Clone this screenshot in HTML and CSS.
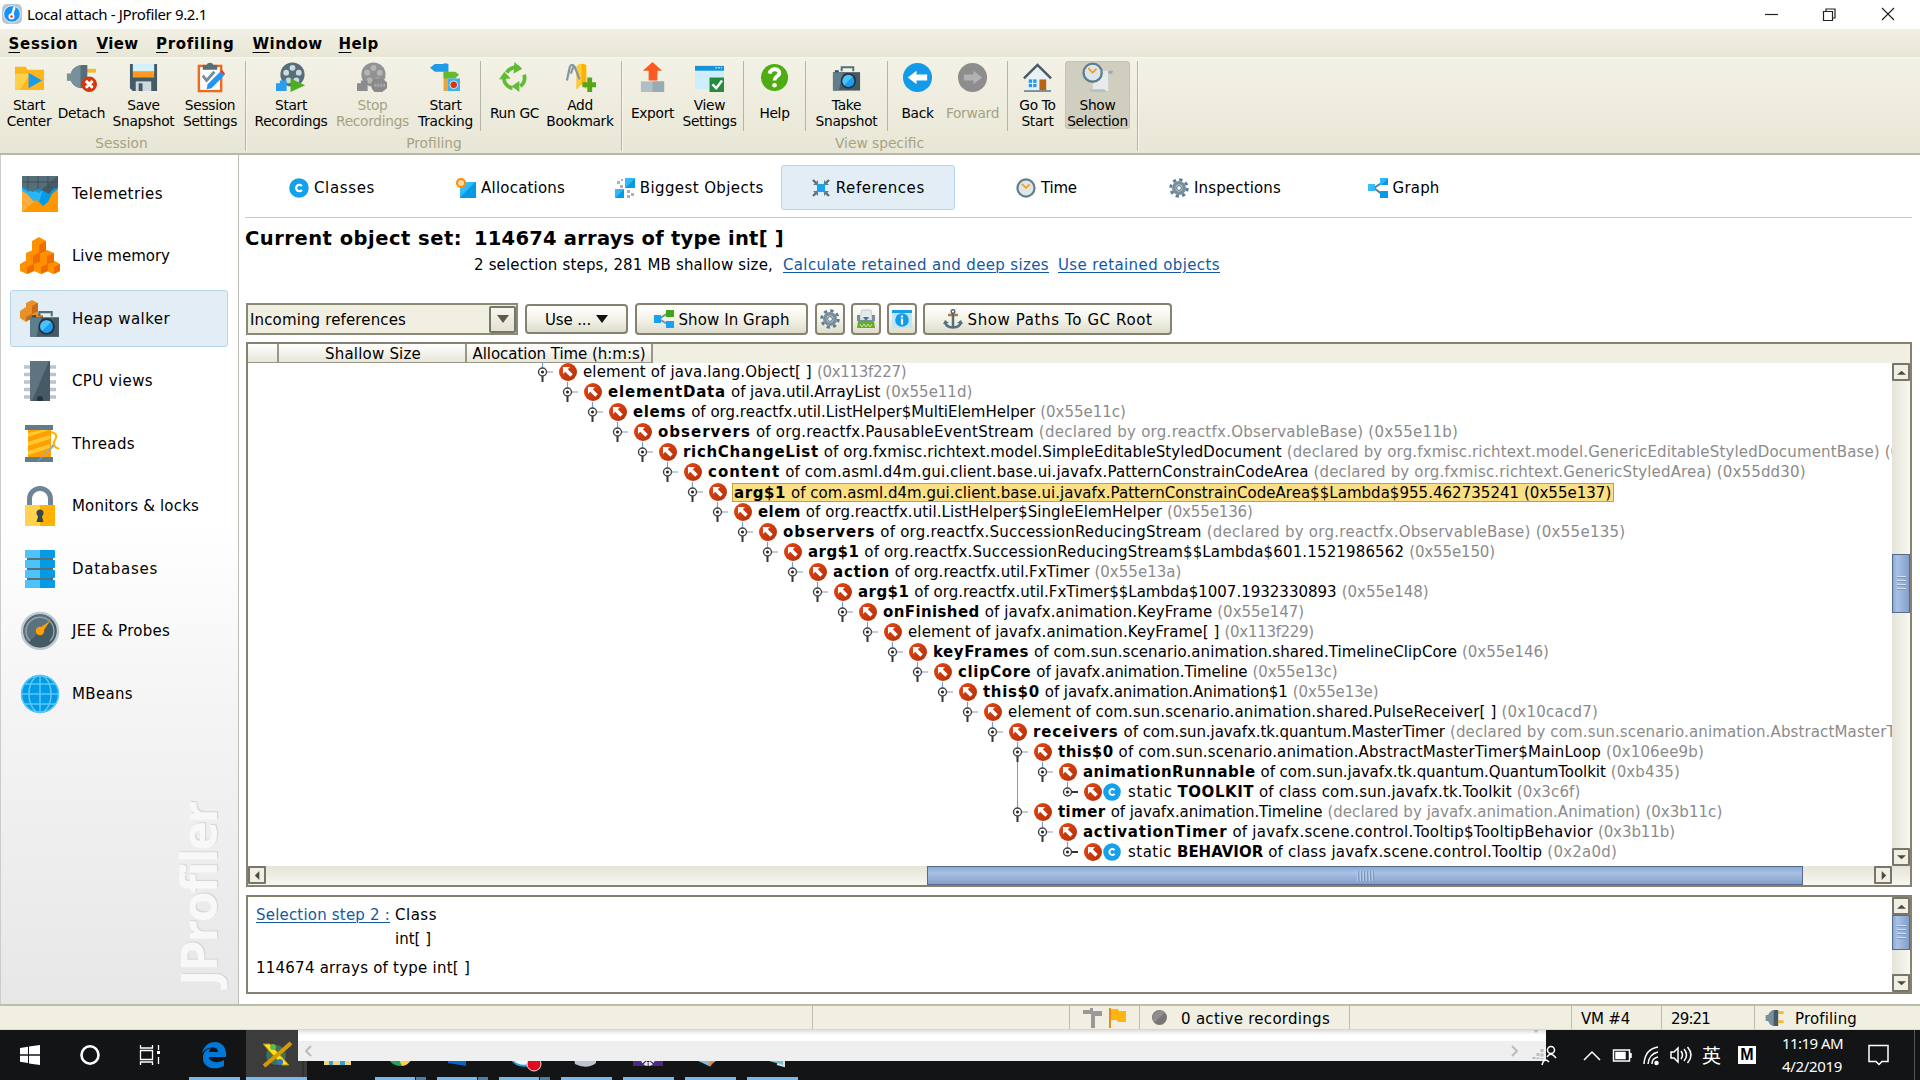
FILE: index.html
```html
<!DOCTYPE html>
<html lang="en">
<head>
<meta charset="utf-8">
<title>Local attach - JProfiler 9.2.1</title>
<link rel="stylesheet" href="styles.css">
</head>
<body>
<svg class="defs" width="0" height="0">
  <defs>
    <linearGradient id="gRed" x1="0" y1="0" x2="1" y2="1"><stop offset="0" stop-color="#e64a19"/><stop offset="1" stop-color="#b32d05"/></linearGradient>
    <linearGradient id="gBlue" x1="0" y1="0" x2="1" y2="1"><stop offset="0" stop-color="#4fc3f7"/><stop offset=".5" stop-color="#29b6f6"/><stop offset=".5" stop-color="#039be5"/></linearGradient>
  </defs>
  <symbol id="ref" viewBox="0 0 18 18"><circle cx="9" cy="9" r="9" fill="url(#gRed)"/><path d="M4 4h7l-2.2 2.2 5 5-2.6 2.6-5-5L4 11z" fill="#fff"/></symbol>
  <symbol id="cls" viewBox="0 0 18 18"><circle cx="9" cy="9" r="8.8" fill="#14a0ec"/><path d="M11.6 7.2A2.9 2.9 0 1 0 11.6 10.8" fill="none" stroke="#fff" stroke-width="2"/></symbol>
  <symbol id="camera" viewBox="0 0 30 26"><path d="M10 5V1h12v4" fill="none" stroke="#546e7a" stroke-width="2"/><path d="M1 6h28v19H1z" fill="#455a64"/><path d="M1 6h11L7 25H1z" fill="#607d8b"/><path d="M3 4h4v2H3z" fill="#37474f"/><circle cx="17" cy="15" r="8" fill="#263238"/><circle cx="17" cy="15" r="6.2" fill="#1e9df0"/><path d="M12.6 19.4a6.2 6.2 0 0 1 8.8-8.8z" fill="#4fc0fa"/></symbol>
  <symbol id="gear" viewBox="0 0 20 20"><circle cx="10" cy="10" r="8.3" fill="none" stroke="#607d8b" stroke-width="2.8" stroke-dasharray="3.25 3.27"/><circle cx="10" cy="10" r="5.2" fill="#cfd8dc" stroke="#78909c" stroke-width="3.6"/><circle cx="10" cy="10" r="2.4" fill="#f5f7f8" stroke="#546e7a"/></symbol>
  <symbol id="clock" viewBox="0 0 22 22"><circle cx="11" cy="11" r="9.4" fill="#dde7eb" stroke="#607d8b" stroke-width="2.4"/><path d="M6.5 6.5L11 11l4-4" fill="none" stroke="#ff9d1c" stroke-width="2"/></symbol>
  <symbol id="plug" viewBox="0 0 22 20"><path d="M14 4h6M14 14h6" stroke="#f5b82e" stroke-width="3"/><path d="M14 1v18H10A9 9 0 0 1 3 13H0V7h3A9 9 0 0 1 10 1z" fill="#455a64"/><path d="M9 1v18A9 9 0 0 1 3 13H0V7h3A9 9 0 0 1 9 1z" fill="#78909c"/></symbol>
</svg>

<header class="titlebar">
  <svg class="app-icon" viewBox="0 0 20 20"><rect width="20" height="20" rx="5" fill="#b9c6d2"/><circle cx="10" cy="10" r="8.3" fill="#1792f0" stroke="#e8eef4"/><path d="M12.500 3L10 11" stroke="#fff" stroke-width="2.4"/><circle cx="9.500" cy="12.500" r="3" fill="#fff"/><circle cx="9.500" cy="12.500" r="1.300" fill="#e33"/></svg>
  <span class="caption" data-w="180">Local attach - JProfiler 9.2.1</span>
  <svg class="win-buttons" viewBox="0 0 150 28" fill="none" stroke="#222" stroke-width="1.2"><path d="M15 13.500h13"/><path d="M73.500 10.500h9v9h-9zM76 10V8h9v9h-2.500"/><path d="M132 7l12 12M144 7l-12 12"/></svg>
</header>

<nav class="menubar">
  <span class="m1" data-w="70"><u>S</u>ession</span><span class="m2" data-w="42"><u>V</u>iew</span><span class="m3" data-w="78"><u>P</u>rofiling</span><span class="m4" data-w="70"><u>W</u>indow</span><span data-w="40"><u>H</u>elp</span>
</nav>

<section class="toolbar">
  <div class="group g-session">
    <div class="tools">
      <div class="tool w54"><svg viewBox="0 0 32 32"><path d="M1 5h11l2 3h17v21H1z" fill="#ffb61c"/><path d="M1 12h16L6 29H1z" fill="#ffd04a"/><path d="M15 11l14 8-14 8z" fill="#1e9be6"/></svg><p>Start<br>Center</p></div>
      <div class="tool w51"><svg viewBox="0 0 32 32"><path d="M20 9h11" stroke="#f5b82e" stroke-width="4"/><path d="M22 3v24h-6C9 26 6 22 5 19H1v-7h4c1-4 4-8 11-9z" fill="#546e7a"/><path d="M15 3v24C9 26 6 22 5 19H1v-7h4c1-4 4-7 10-9z" fill="#78909c"/><circle cx="24" cy="23" r="8" fill="#d8350f"/><path d="M20.500 19.500l7 7m0-7l-7 7" stroke="#fff" stroke-width="3"/></svg><p>Detach</p></div>
      <div class="tool w73"><svg viewBox="0 0 32 32"><path d="M2 2h28v28H5l-3-3z" fill="#455a64"/><path d="M5 2h22v8H5z" fill="#d3f0fb"/><path d="M5 10h22v6H5z" fill="#ff9a1c"/><path d="M8 20h16v10H8z" fill="#cfd8dc"/><path d="M11 22h4v8h-4z" fill="#455a64"/></svg><p>Save<br>Snapshot</p></div>
      <div class="tool w60"><svg viewBox="0 0 32 32"><rect x="4" y="4" width="23" height="26" fill="#fff" stroke="#ed6a1f" stroke-width="2.500"/><path d="M8 3h4c1-3 6-3 7 0h4v5H8z" fill="#546e7a"/><path d="M8 14l4 5 8-9" fill="none" stroke="#78909c" stroke-width="3"/><path d="M12 28l1-5L26 10l4 4-13 13z" fill="#2196f3"/><path d="M26 10l4 4 1-2-3-4z" fill="#e53935"/></svg><p>Session<br>Settings</p></div>
    </div>
    <div class="group-name">Session</div>
  </div>
  <div class="group g-profiling">
    <div class="tools">
      <div class="tool w80"><svg viewBox="0 0 32 32"><circle cx="17" cy="13" r="12.500" fill="#546e7a"/><g fill="#cfd8dc"><circle cx="17" cy="6" r="3"/><circle cx="10.500" cy="11" r="3"/><circle cx="23.500" cy="11" r="3"/><circle cx="13" cy="19" r="3"/><circle cx="21" cy="19" r="3"/></g><path d="M0 22h4v-3h7v11H0z" fill="#2b9fee"/><path d="M15 17l15 7-15 7z" fill="#4caf1f"/></svg><p>Start<br>Recordings</p></div>
      <div class="tool w83 off"><svg viewBox="0 0 32 32"><circle cx="17" cy="13" r="12.500" fill="#929292"/><g fill="#b5b5b5"><circle cx="17" cy="6" r="3"/><circle cx="10.500" cy="11" r="3"/><circle cx="23.500" cy="11" r="3"/><circle cx="13" cy="19" r="3"/><circle cx="21" cy="19" r="3"/></g><path d="M0 22h4v-3h7v11H0z" fill="#8c8c8c"/><path d="M18 17h8l5 4v6l-5 4h-8l-3-4v-6z" fill="#8a8a8a"/><path d="M18 24h11" stroke="#aaa" stroke-width="3" stroke-dasharray="2 1"/></svg><p>Stop<br>Recordings</p></div>
      <div class="tool w63"><svg viewBox="0 0 32 32"><path d="M14 1h4v29h-4z" fill="#e8a33c"/><path d="M0 6l5-4h14v8H5z" fill="#1e9be6"/><path d="M14 10h12l4 3-4 4H14z" fill="#66bb2a"/><path d="M18 17h13v13H18z" fill="#3bb2f4"/><circle cx="24.500" cy="23.500" r="4" fill="#d8350f" stroke="#d4eefb"/></svg><p>Start<br>Tracking</p></div>
      <i class="bar wide"></i>
      <div class="tool w57"><svg viewBox="0 0 32 32"><g fill="none" stroke="#62bb35" stroke-width="4"><path d="M8 11a11 11 0 0 1 13-5"/><path d="M26 13a11 11 0 0 1-4 12"/><path d="M14 27A11 11 0 0 1 5 17"/></g><g fill="#62bb35"><path d="M16 0l8 7-9 5z"/><path d="M21 19.500V31l-8-6z"/><path d="M0 18l5.500-8L12 17z"/></g></svg><p>Run GC</p></div>
      <div class="tool w74"><svg viewBox="0 0 32 32"><path d="M12 5q4-5 10-2v25l-5-5-5 5z" fill="#ffb300"/><path d="M12 5q2-4 5-3v21l-5 5z" fill="#ffca3a"/><path d="M2 19L5 5q2-4 5 0l5 13M6 12l3-8" fill="none" stroke="#8196a1" stroke-width="2.200"/><path d="M18 21h5v-5h5v5h4v5h-4v5h-5v-5h-5z" fill="#58a618"/></svg><p>Add<br>Bookmark</p></div>
    </div>
    <div class="group-name">Profiling</div>
  </div>
  <div class="group g-view">
    <div class="tools">
      <div class="tool w53"><svg viewBox="0 0 32 32"><path d="M4 20h24v11H4z" fill="#b0bec5"/><path d="M16 20h12v11H16z" fill="#9aabb4"/><path d="M16 0l10 9h-5v10H12V9H6z" fill="#fb5a22"/></svg><p>Export</p></div>
      <div class="tool w61"><svg viewBox="0 0 32 32"><path d="M1 4h30v24H1z" fill="#cdeffd"/><path d="M1 4h30v5H1z" fill="#1793d8"/><path d="M22 6h7" stroke="#fff" stroke-dasharray="2 1"/><path d="M16 16h15v15H16z" fill="#268c3c"/><path d="M19 23l4 4 6-8" fill="none" stroke="#fff" stroke-width="2.500"/></svg><p>View<br>Settings</p></div>
      <i class="bar"></i>
      <div class="tool w57"><svg viewBox="0 0 32 32"><circle cx="16" cy="16" r="14" fill="#4fad13"/><path d="M11 12c1-7 11-5 10 0-1 3-5 3-5 7" fill="none" stroke="#fff" stroke-width="4"/><circle cx="16" cy="24" r="2.400" fill="#fff"/></svg><p>Help</p></div>
      <i class="bar near"></i>
      <div class="tool w77"><svg viewBox="0 0 32 32"><use href="#camera" x="1" y="4" width="30" height="27"/></svg><p>Take<br>Snapshot</p></div>
      <i class="bar near"></i>
      <div class="tool w55"><svg viewBox="0 0 32 32"><circle cx="16" cy="16" r="15" fill="#139ae9"/><path d="M6 16l9-7v4h11v6H15v4z" fill="#fff"/></svg><p>Back</p></div>
      <div class="tool w55 off"><svg viewBox="0 0 32 32"><circle cx="16" cy="16" r="15" fill="#8d8d8d"/><path d="M26 16l-9-7v4H7v6h10v4z" fill="#b2b2b2"/></svg><p>Forward</p></div>
      <i class="bar far"></i>
      <div class="tool w55"><svg viewBox="0 0 32 32"><path d="M5 15L16 5l11 10v15H5z" fill="#e9f1f6"/><path d="M2 17L16 3l14 14" fill="none" stroke="#455a64" stroke-width="2.500"/><path d="M18 18h7v12h-7z" fill="#b9650f"/><path d="M7 18h8v8H7z" fill="#2196f3"/><path d="M11 18v8M7 22h8" stroke="#fff"/><path d="M2 30h28" stroke="#78909c" stroke-width="2"/></svg><p>Go To<br>Start</p></div>
      <div class="tool w65 pressed"><svg viewBox="0 0 32 32"><path d="M12 9h18v3h-3v18H11z" fill="#e6ebee"/><path d="M7 28h16l3 3H10z" fill="#b3c0c7"/><path d="M27 9h5l-1 3h-4z" fill="#9aaab3"/><use href="#clock" x="0" y="0" width="22" height="22"/></svg><p>Show<br>Selection</p></div>
    </div>
    <div class="group-name">View specific</div>
  </div>
</section>

<main class="workspace">
  <aside class="sidebar">
    <div class="nav"><svg viewBox="0 0 40 40"><path d="M2 2h36v36H2z" fill="#ff9800"/><path d="M2 2h36v13l-6 5-4 8-5 4-6-6-5 2-5-8-5-3z" fill="#039be5"/><path d="M2 14l6 4 5-2 6 3 4-3-4 12-3-2-4 2-5-8-5-3z" fill="#29b6f6"/><path d="M2 2h36v11l-5 2-4 5-5-3-6-2-5 3-5-2-6-3z" fill="#546e7a"/><path d="M38 2v11l-5 2-4 5-5-3-3-1z" fill="#455a64"/><path d="M8 2v13M18 2v13M28 2v13M2 8h36" stroke="#3f515b"/><path d="M2 38l14-12-3 1-6-7-5-3z" fill="#ffab3d"/></svg><span data-w="91">Telemetries</span></div>
    <div class="nav"><svg viewBox="0 0 40 40"><g fill="#ff9100"><path d="M12 5l7-4 7 4v10l-7 4-7-4zM6 17l7-3 7 3v10l-7 4-7-4zM20 17l7-3 7 3v10l-7 4-7-4zM0 28l7-4 7 4v7l-7 3-7-3zM14 28l7-4 7 4v7l-7 3-7-3zM27 28l6-4 7 4v7l-7 3-6-3z"/></g><path d="M19 9l7-4v10l-7 3zM13 20l7-4v10l-7 2zM27 20l7-3v9l-7 2zM7 31l7-3v7l-7 3zM21 31l7-3v7l-7 3zM34 31l6-3v7l-6 3z" fill="#ef6c00"/></svg><span data-w="98">Live memory</span></div>
    <div class="nav active"><svg viewBox="0 0 40 40"><path d="M6 4l6-3 6 3v10l5 3-4 6-7-4-6 4-6-4v-7l6-4z" fill="#e8912a"/><path d="M12 7l6-3v8l-6 3zM18 19l5-3v4l-5 3zM6 18l6-3v5l-6 2z" fill="#c96a16"/><use href="#camera" x="9" y="12" width="31" height="27"/></svg><span data-w="98">Heap walker</span></div>
    <div class="nav"><svg viewBox="0 0 40 40"><path d="M4 6h32M4 13.500h32M4 21h32M4 28.500h32M4 36h32" stroke="#b8c5cb" stroke-width="3.500"/><path d="M10 0h20v40H10z" fill="#455a64"/><path d="M10 0h19L12 40h-2z" fill="#607380"/><circle cx="20" cy="38" r="3" fill="#263238"/></svg><span data-w="81">CPU views</span></div>
    <div class="nav"><svg viewBox="0 0 40 40"><path d="M8 6h23v27H8z" fill="#ffa000"/><path d="M8 9l14-3h7L8 13zM8 18l22-7v4L8 22zM8 27l22-7v4L8 31z" fill="#ffc933"/><path d="M5 1h28v5H5zM5 33h28v5H5z" fill="#607d8b"/><path d="M31 8q8 2 4 8t4 9" fill="none" stroke="#ffb300" stroke-width="2"/><path d="M15 40L33 20l2 2z" fill="#9cacb5"/></svg><span data-w="63">Threads</span></div>
    <div class="nav"><svg viewBox="0 0 40 40"><path d="M9.500 20v-7a10.500 10.500 0 0 1 21 0v7" fill="none" stroke="#6d8594" stroke-width="5"/><path d="M5 19h30v21H5z" fill="#ffb300"/><path d="M5 19h15v21H5z" fill="#ffd34f"/><circle cx="20" cy="27" r="3.500" fill="#37474f"/><path d="M19 27h2l2.500 9h-7z" fill="#37474f"/></svg><span data-w="127">Monitors &amp; locks</span></div>
    <div class="nav"><svg viewBox="0 0 40 40"><path d="M7 8h26v28H7z" fill="#546e7a"/><g fill="#039be5"><rect x="5" y="1" width="30" height="8" rx="1"/><rect x="5" y="11" width="30" height="8" rx="1"/><rect x="5" y="21" width="30" height="8" rx="1"/><rect x="5" y="31" width="30" height="8" rx="1"/></g><path d="M5 1h15v8H5zM5 11h15v8H5zM5 21h15v8H5zM5 31h15v8H5z" fill="#4fc3f7"/></svg><span data-w="86">Databases</span></div>
    <div class="nav"><svg viewBox="0 0 40 40"><circle cx="20" cy="20" r="18" fill="#455a64" stroke="#bfcad0" stroke-width="2.500"/><path d="M8 32A17 17 0 0 1 32 8z" fill="#5b717d"/><path d="M10 30a14 14 0 1 1 20 0" fill="none" stroke="#90a4ae" stroke-width="1.500"/><path d="M18 18L30 10 22 22z" fill="#ffa000"/><circle cx="20" cy="20" r="4.200" fill="#ffa000"/></svg><span data-w="98">JEE &amp; Probes</span></div>
    <div class="nav"><svg viewBox="0 0 40 40"><circle cx="20" cy="20" r="19" fill="#039be5"/><g fill="none" stroke="#5cc8fa" stroke-width="1.500"><circle cx="20" cy="20" r="18.500"/><ellipse cx="20" cy="20" rx="11" ry="18.500"/><path d="M20 1v38M1 20h38M5 10h30M5 30h30"/></g></svg><span data-w="61">MBeans</span></div>
    <div class="watermark"><span data-w="183">JProfiler</span></div>
  </aside>

  <section class="content">
    <div class="tabs">
      <div class="tab"><svg viewBox="0 0 18 18"><use href="#cls"/></svg><span data-w="61">Classes</span></div>
      <div class="tab"><svg viewBox="0 0 20 20"><path d="M4 4h16v16H4z" fill="url(#gBlue)"/><circle cx="5" cy="5" r="4" fill="#ffd9a0" stroke="#ff8a00" stroke-width="2"/></svg><span data-w="84">Allocations</span></div>
      <div class="tab"><svg viewBox="0 0 20 20"><path d="M10 0h10v10H10zM0 11h9v9H0z" fill="url(#gBlue)"/><path d="M2 3h3v3H2zM5 7h3v3H5zM12 12h3v3h-3zM16 15h3v3h-3zM6 1h2v2H6zM12 17h3v3h-3z" fill="#a4b4bd"/></svg><span data-w="124">Biggest Objects</span></div>
      <div class="tab active"><svg viewBox="0 0 20 20"><path d="M2 2l16 16M18 2L2 18" stroke="#546e7a" stroke-width="2.200"/><path d="M2 7l5-5v5zM18 7l-5-5v5zM2 13l5 5v-5zM18 13l-5 5v-5z" fill="#607d8b"/><path d="M6 6h8v8H6z" fill="#1ea2ee"/></svg><span data-w="89">References</span></div>
      <div class="tab"><svg viewBox="0 0 22 22"><use href="#clock"/></svg><span data-w="36">Time</span></div>
      <div class="tab"><svg viewBox="0 0 20 20"><use href="#gear"/></svg><span data-w="87">Inspections</span></div>
      <div class="tab"><svg viewBox="0 0 20 20"><path d="M15 4L6 10l9 7" fill="none" stroke="#607d8b" stroke-width="2"/><path d="M0 6h7v7H0zM12 0h8v7h-8zM12 13h8v7h-8z" fill="url(#gBlue)"/></svg><span data-w="47">Graph</span></div>
    </div>

    <div class="summary">
      <h1 data-w="217">Current object set:</h1>
      <div>
        <h2 data-w="310">114674 arrays of type int[ ]</h2>
        <p><span class="steps" data-w="299">2 selection steps, 281 MB shallow size,</span><a data-w="266">Calculate retained and deep sizes</a><a data-w="162">Use retained objects</a></p>
      </div>
    </div>

    <div class="actions">
      <div class="combo"><span data-w="156">Incoming references</span><b><svg viewBox="0 0 12 8"><path d="M0 0h12L6 8z" fill="#5b5a4c"/></svg></b></div>
      <div class="button use"><span data-w="46">Use ...</span><svg class="caret" viewBox="0 0 12 8"><path d="M0 0h12L6 8z" fill="#111"/></svg></div>
      <div class="button graph"><svg viewBox="0 0 20 20"><path d="M14 4L5 10l10 6" fill="none" stroke="#78909c" stroke-width="2"/><path d="M12 1h8v7h-8z" fill="#43a31b"/><path d="M0 6h7v8H0zM12 12h8v7h-8z" fill="#1aa1f0"/></svg><span data-w="111">Show In Graph</span></div>
      <div class="button square"><svg viewBox="0 0 20 20"><use href="#gear"/></svg></div>
      <div class="button square"><svg viewBox="0 0 20 20"><path d="M6 1h9l1 9H4z" fill="#e4eaee" stroke="#c4ced4"/><path d="M1 6h3v5h12V6h3v6H1z" fill="#78909c"/><path d="M10 5v3H7l3 4 3-4h-3" fill="#546e7a"/><path d="M2 12h16l1 7H1z" fill="#66ad27"/><path d="M4 15l2 3 2-3 2 3 2-3 2 3 2-3" fill="none" stroke="#c5e5a5"/></svg></div>
      <div class="button square"><svg viewBox="0 0 20 20"><path d="M0 1h20v18H0z" fill="#bfe7fb"/><path d="M0 1h20v3H0z" fill="#1a9ce6"/><circle cx="10" cy="11" r="6.800" fill="#139ae9"/><path d="M10 6.500v2M10 9.500v6" stroke="#fff" stroke-width="2.200"/></svg></div>
      <div class="button paths"><svg viewBox="0 0 20 20"><path d="M5 6h10" stroke="#b9783a" stroke-width="2.500"/><circle cx="10" cy="2.500" r="1.800" fill="none" stroke="#546e7a" stroke-width="1.500"/><path d="M10 4v15M2 13q1 5.500 8 5.500T18 13" fill="none" stroke="#546e7a" stroke-width="2.500"/><path d="M0 15l2-4 4 3zM20 15l-2-4-4 3z" fill="#546e7a"/></svg><span data-w="185">Show Paths To GC Root</span></div>
    </div>

    <div class="table">
      <div class="thead"><div class="c1"></div><div class="c2"><span data-w="96">Shallow Size</span></div><div class="c3"><span data-w="173">Allocation Time (h:m:s)</span></div></div>
      <div class="tbody">
        <div class="tree" id="tree"></div>
        <div class="vbar"><b class="arrow"><svg viewBox="0 0 10 6"><path d="M0 5.500L5 1l5 4.500z"/></svg></b><i class="thumb v1"></i><b class="arrow end"><svg viewBox="0 0 10 6"><path d="M0 .5L5 5l5-4.500z"/></svg></b></div>
      </div>
      <div class="hbar"><b class="arrow"><svg viewBox="0 0 10 10"><path d="M7 0v10L2 5z"/></svg></b><i class="thumb"></i><b class="arrow end"><svg viewBox="0 0 10 10"><path d="M3 0v10l5-5z"/></svg></b></div>
    </div>

    <div class="details">
      <div class="text">
        <p><a data-w="134">Selection step 2 :</a><span class="kind" data-w="42">Class</span></p>
        <p class="type"><span data-w="36">int[ ]</span></p>
        <p class="total"><span data-w="214">114674 arrays of type int[ ]</span></p>
      </div>
      <div class="vbar"><b class="arrow"><svg viewBox="0 0 10 6"><path d="M0 5.500L5 1l5 4.500z"/></svg></b><i class="thumb v2"></i><b class="arrow end"><svg viewBox="0 0 10 6"><path d="M0 .5L5 5l5-4.500z"/></svg></b></div>
    </div>
  </section>
</main>

<footer class="status">
  <div class="s1"></div><div class="s2"></div>
  <div class="s3"><svg viewBox="0 0 44 20"><path d="M0 2h7V0h3v3h9v5h-7v12H8V6H0z" fill="#999"/><path d="M27 0v20" stroke="#ef8a17" stroke-width="2"/><path d="M28 1h7l1 2h7v11h-8l-1-2h-6z" fill="#ffb50f"/></svg></div>
  <div class="s4"><svg viewBox="0 0 16 16"><circle cx="8" cy="8" r="8" fill="#777"/><path d="M2.400 13.600A8 8 0 0 1 13.600 2.400z" fill="#8e8e8e"/></svg><span data-w="149">0 active recordings</span></div>
  <div class="s5"></div>
  <div class="s6"><span data-w="49">VM #4</span></div>
  <div class="s7"><span data-w="39">29:21</span></div>
  <div class="s8"><svg viewBox="0 0 22 20"><use href="#plug"/></svg><span data-w="62">Profiling</span></div>
</footer>

<div class="taskbar">
  <svg class="apps" viewBox="0 0 820 50">
    <path d="M20 18l8-1.200V24.300H20zM29 16.600L40 15v9.300H29zM20 25.700h8V33l-8-1.200zM29 25.700h11V35l-11-1.600z" fill="#fff"/>
    <ellipse cx="90" cy="25" rx="8.500" ry="8.700" fill="none" stroke="#fff" stroke-width="2.600"/>
    <path d="M140.500 15v3h12v-3M140.500 20.500h12v9h-12zM140.500 35v-3h12v3M158.500 15v5M158.500 27v7" fill="none" stroke="#fff" stroke-width="1.300"/><path d="M157 21h3v3h-3z" fill="#fff"/>
    <path d="M202 23C204 15 210 12 215 12c8 0 12 7 11 15h-17c0 5 9 7 15 3v6c-9 5-22 2-21-9 0-5 4-8 8-9-2 2-2 3-2 4h9c0-7-11-6-16 1z" fill="#0078d7"/>
    <path d="M246 0h61v50h-61z" fill="#3c3c3c"/><path d="M303 0v50" stroke="#242424"/>
    <circle cx="276" cy="25" r="10" fill="#3c7060"/><path d="M263 14h7l19 21h-7z" fill="#ffe21a" stroke="#b58b00"/><path d="M291 13l-9 8-18 15" stroke="#d89a00" stroke-width="4"/><circle cx="273" cy="17" r="3" fill="#62b84c"/><circle cx="280" cy="32" r="3" fill="#3276cc"/>
    <path d="M324 28h27v7h-27z" fill="#f4d681"/><path d="M329 28h4v7h-4zM340 28h5v7h-5z" fill="#3aa0cf"/>
    <path d="M388 28h24q-4 8-12 8t-12-8" fill="#1fa35b"/><path d="M400 28h12q-3 7-10 8l-2-4z" fill="#ffce43"/>
    <path d="M448 28h28v3h-10v5l-18-3z" fill="#0a64c0"/>
    <path d="M512 30q6 8 18 5v-6z" fill="#eef8fd"/><path d="M512 30q6 8 18 5" fill="none" stroke="#21a6d9" stroke-width="2"/><circle cx="534" cy="34" r="7" fill="#e00b20" stroke="#f8d4d7"/>
    <path d="M574 28h22v5q-9 7-21 1z" fill="#bfc3d0"/>
    <path d="M633 28h30v8h-30z" fill="#4b2a86"/><circle cx="648" cy="29" r="5" fill="#222" stroke="#eee" stroke-width="4" stroke-dasharray="3 1"/>
    <path d="M696 30l24-2-11 8z" fill="#7cbfe3"/><path d="M714 28l-5 8" stroke="#e58a35" stroke-width="3"/>
    <path d="M758 28l25 7 2-7z" fill="#6fc0cd"/><path d="M777 34l7 2v-8" stroke="#ddd" fill="none" stroke-width="2"/>
    <path d="M189 48.500h51M246 48.500h61M375 48.500h40M437 48.500h40M499 48.500h40M561 48.500h51M623 48.500h51M685 48.500h51M747 48.500h51" stroke="#76b9ed" stroke-width="3"/><path d="M416 48.500h10M478 48.500h10M540 48.500h10" stroke="#4f7ea3" stroke-width="3"/>
  </svg>
  <svg class="tray" viewBox="0 0 250 50" fill="none" stroke="#fff" stroke-width="1.500">
    <path d="M42 30l8-8 8 8"/><path d="M71.500 20h16v11h-16zM89 23v5"/><path d="M74 22.500h9v6h-9z" fill="#fff"/>
    <path d="M102 34q1-15 14-17M106 34q1-10 10-12M110 34q0-6 6-7"/><circle cx="114.500" cy="33" r="1.500" fill="#fff"/>
    <path d="M129 22h3l4-4v14l-4-4h-3zM139 21q3 4 0 8M142 19q5 6 0 12M145.500 17q7 8 0 16"/>
    <path d="M196 16h18v18h-18z" fill="#fff" stroke="none"/>
  </svg>
  <span class="ime">英</span><span class="mode">M</span>
  <div class="clock"><span data-w="61">11:19 AM</span><span data-w="60">4/2/2019</span></div>
  <svg class="notify" viewBox="0 0 50 50" fill="none" stroke="#fff" stroke-width="1.500"><path d="M3 15.500h19v16h-6l-3 3-3-3H3z"/><path d="M48.500 0v50" stroke="#555" stroke-width="1"/></svg>
  <div class="fragment">
    <svg viewBox="0 0 1248 31" fill="none" stroke="#bcbcbc" stroke-width="2"><path d="M13 16l-5 5 5 5M1214 16l5 5-5 5"/><path d="M1235 0h6l-3 3z" fill="#bcbcbc" stroke="none"/><path d="M1244 19v10M1240 23v6M1236 27v2" stroke-dasharray="3 1.500" stroke-width="3"/></svg>
  </div>
  <svg class="people" viewBox="0 0 16 22" fill="none" stroke="#fff" stroke-width="1.500"><circle cx="10" cy="6" r="3.500"/><path d="M6 13q4-6 9 1M1 21q2-8 7-3"/></svg>
</div>
<script src="app.js"></script>
</body>
</html>
```
FILE: styles.css
```css
* { box-sizing: border-box; }
body { margin: 0; width: 1920px; height: 1080px; overflow: hidden; display: flex; flex-direction: column; background: #fff; color: #000; font: 15px/20px "DejaVu Sans", Verdana, sans-serif; }
p, h1, h2 { margin: 0; }
svg { display: block; flex: none; }
.defs { position: absolute; }
[data-w], .seg { display: inline-block; white-space: pre; }
a { color: #1459a0; text-decoration: underline; text-decoration-thickness: 1px; text-underline-offset: 2px; }

.titlebar { height: 29px; flex: none; display: flex; align-items: center; padding-left: 2px; font-family: "Noto Sans", sans-serif; font-size: 15px; }
.app-icon { width: 20px; height: 20px; margin-top: -2px; }
.caption { margin: -2px 0 0 5px; }
.win-buttons { width: 150px; height: 28px; margin-left: auto; margin-right: 20px; }

.menubar { height: 28px; flex: none; display: flex; align-items: center; padding: 1px 0 0 8.500px; background: linear-gradient(#f1f0e3, #e8e6d5); font-weight: bold; }
.menubar u { text-underline-offset: 3px; text-decoration-thickness: 1px; }
.menubar .m1 { margin-right: 18px; }
.menubar .m2 { margin-right: 17.500px; }
.menubar .m3 { margin-right: 18px; }
.menubar .m4 { margin-right: 16px; }

.toolbar { height: 98px; flex: none; display: flex; padding-top: 3px; background: linear-gradient(#f3f2e6, #e8e6d5); border-top: 1px solid #f7f6ec; border-bottom: 2px solid #b9b7a6; font-size: 13.75px; line-height: 16px; }
.group { height: 90px; border-right: 1px solid #b5b4a5; box-shadow: 1px 0 #f8f7ee; }
.g-session { width: 246px; padding-left: 2px; }
.g-profiling { width: 376px; padding-left: 5px; }
.g-view { width: 516px; padding-left: 4px; }
.tools { display: flex; height: 70px; }
.tool { height: 68px; display: flex; flex-direction: column; align-items: center; flex: none; white-space: nowrap; text-align: center; }
.tool svg { width: 31px; height: 31px; margin-top: 1px; }
.tool p { height: 34px; margin-top: 3px; display: grid; align-content: center; letter-spacing: -.3px; }
.off, .group-name { color: #a4a382; }
.pressed { background: #d0cebf; border-radius: 4px; box-shadow: inset 0 0 0 1px #c5c3b3; }
.w51 { width: 51px; } .w53 { width: 53px; } .w54 { width: 54px; } .w55 { width: 55px; } .w57 { width: 57px; } .w60 { width: 60px; } .w61 { width: 61px; } .w63 { width: 63px; } .w65 { width: 65px; } .w73 { width: 73px; } .w74 { width: 74px; } .w77 { width: 77px; } .w80 { width: 80px; } .w83 { width: 83px; }
.bar { width: 1px; margin: 0 2px 0 3px; background: #b5b4a5; flex: none; }
.bar.near { margin-left: 2px; }
.bar.wide { margin-right: 5px; }
.bar.far { margin-left: 7px; }
.group-name { text-align: center; padding-top: 4px; }
.g-session .group-name, .g-profiling .group-name, .g-view .group-name { margin-left: -4px; }

.workspace { flex: 1; min-height: 0; display: flex; }
.sidebar { width: 239px; flex: none; padding: 10px 9px 0 9px; border-left: 1px solid #ccc; border-right: 1px solid #bcbbb4; background: linear-gradient(#fff 0, #fff 43%, #f3f3f3 68%, #e7e7e7 100%); position: relative; }
.nav { height: 57px; margin-bottom: 5.500px; display: flex; align-items: center; padding-left: 9px; border: 1px solid transparent; border-radius: 3px; width: 218px; }
.nav svg { width: 40px; height: 40px; margin-right: 12px; }
.nav.active, .tab.active { background: #e3edf6; border-color: #b5d5ea; }
.watermark { position: absolute; left: 164px; bottom: 18px; height: 183px; writing-mode: vertical-rl; transform: rotate(180deg); font: bold 50px/66px "Open Sans", sans-serif; color: #f8f8f8; text-shadow: 1px 1px 1px #d4d4d4; }

.content { flex: 1; min-width: 0; padding: 10px 8px 0 7px; }
.tabs { display: flex; gap: 4.600px; height: 53px; margin-left: -1px; border-bottom: 1px solid #c9c9c9; }
.tab { width: 174px; height: 45px; display: flex; align-items: center; justify-content: center; gap: 5px; border: 1px solid transparent; border-radius: 3px; }
.tab svg { width: 20px; height: 20px; }
.summary { display: flex; height: 85px; padding-top: 10px; margin-left: -1px; }
h1, h2 { font-size: 19.500px; line-height: 22px; font-weight: bold; }
h1 { width: 229px; }
.summary p { margin-top: 5px; display: flex; }
.steps { margin-right: 10px; }
.summary a { margin-right: 9px; }

.actions { display: flex; gap: 7px; height: 39px; align-items: flex-start; }
.actions span { padding-top: 1px; }
.combo { width: 272px; height: 32px; border: 2px solid #8b8a75; background: #f1efe2; display: flex; align-items: center; padding-left: 2px; }
.combo b { margin-left: auto; width: 27px; height: 27px; display: grid; place-items: center; border: 2px solid #77766a; border-radius: 2px; background: linear-gradient(#f7f6ee, #e3e1d2); }
.combo svg, .caret { width: 12px !important; height: 8px !important; }
.button { height: 32px; border: 2px solid #85836f; border-radius: 4px; background: linear-gradient(#fff, #f4f3ea 50%, #dedccc); display: flex; align-items: center; justify-content: center; gap: 5px; }
.button svg { width: 20px; height: 20px; }
.use { width: 103px; height: 30px; margin-top: 1px; }
.graph { width: 173px; }
.square { width: 30px; margin-right: -1px; }
.paths { width: 249px; }

.table { height: 545px; border: 2px solid #85836f; display: flex; flex-direction: column; }
.thead { height: 19px; flex: none; display: flex; background: #f1efe2; }
.thead div { background: linear-gradient(#fff, #e8e6d8); border-right: 2px solid #99978a; border-bottom: 1px solid #99978a; height: 19px; line-height: 20px; text-align: center; }
.thead .c2 { padding-left: 2px; }
.c1 { width: 31px; } .c2 { width: 188px; } .c3 { width: 186px; }
.tbody { flex: 1; min-height: 0; display: flex; }
.tree { flex: 1; min-width: 0; overflow: hidden; position: relative; }
.row { height: 20px; display: flex; align-items: center; white-space: pre; position: relative; }
.row:first-child { margin-top: -1px; }
.handle { width: 25px; height: 20px; }
.ref { width: 18px; height: 18px; margin: 0 6.500px 0 3.500px; }
.leaf .ref { margin-right: 0; }
.class { width: 18px; height: 18px; margin: 0 7.500px 0 1px; }
.seg { flex: none; }
.g { color: #8b8b8b; }
.selected { margin-left: -1px; padding-left: 1px; height: 19px; line-height: 18px; background: #fbdf85; border: 1px solid #c2a23a; display: flex; padding-right: 2px; }
.guide { position: absolute; top: 0; width: 1px; height: 20px; background: #7d9cc9; }
.vbar { width: 18px; flex: none; display: flex; flex-direction: column; background: linear-gradient(90deg, #e6e4d8, #f8f7f1); }
.hbar { height: 19px; flex: none; display: flex; padding-right: 18px; background: linear-gradient(#e6e4d8, #f8f7f1); }
.arrow { width: 18px; height: 18px; flex: none; display: grid; place-items: center; border: 2px solid #77766a; border-radius: 1px; background: #f1efe2; }
.arrow svg { width: 9px; height: 9px; fill: #4c4b42; }
.end { margin: auto 0 0; }
.hbar .end { margin: 0 0 0 auto; }
.thumb { display: grid; border: 1px solid #536b92; background: repeating-linear-gradient(#d3e0f2 0 1px, #7a97c4 1px 2px, transparent 2px 4px) center / 9px 16px no-repeat, linear-gradient(90deg, #8aa9d6, #a9c1e4 25%, #849fc9); }
.v1 { height: 59px; margin-top: 173px; }
.v2 { height: 35px; }
.hbar .thumb { width: 876px; margin-left: 661px; background: repeating-linear-gradient(90deg, #b9cdea 0 1px, #7a97c4 1px 2px, transparent 2px 3px) center / 17px 10px no-repeat, linear-gradient(#8aa9d6, #a9c1e4 35%, #849fc9); }
.details { margin-top: 8px; height: 99px; border: 2px solid #85836f; display: flex; }
.text { flex: 1; padding: 8px 0 0 8px; }
.kind { margin-left: 5px; }
.type { padding: 4px 0 0 139px; }
.total { padding-top: 9px; }

.status { height: 26px; flex: none; display: flex; background: #f1efe2; border-top: 2px solid #bdbdac; border-bottom: 1px solid #dad8c8; }
.status div { border-right: 1px solid #bdbdb0; display: flex; align-items: center; flex: none; }
.status span { padding-top: 2px; }
.s1 { width: 813px; } .s2 { width: 257px; } .s3 { width: 70px; } .s4 { width: 210px; } .s5 { width: 222px; } .s6 { width: 90px; padding-left: 9px; } .s7 { width: 93px; padding-left: 9px; }
.status .s8 { width: 165px; padding-left: 10px; border: 0; }
.s3 svg { width: 44px; height: 20px; margin: 1px 0 0 13px; }
.s4 svg { width: 15px; height: 15px; margin: 0 14px 0 12px; }
.s8 svg { width: 21px; height: 18px; margin-right: 9px; }

.taskbar { height: 50px; flex: none; background: #131415; color: #fff; display: flex; position: relative; }
.apps { width: 820px; height: 50px; }
.tray { width: 250px; height: 50px; margin-left: 722px; }
.ime { position: absolute; left: 1702px; top: 15px; font: 19px/20px "Noto Sans CJK SC", sans-serif; }
.mode { position: absolute; left: 1738px; top: 15px; width: 18px; text-align: center; color: #000; font: bold 16px/20px "Liberation Sans", sans-serif; }
.clock { position: absolute; left: 1782px; top: 2px; display: flex; flex-direction: column; font: 15px/23px "Noto Sans", sans-serif; }
.notify { position: absolute; left: 1866px; top: 0; width: 50px; height: 50px; }
.fragment { position: absolute; left: 298px; top: 0; width: 1248px; height: 31px; background: linear-gradient(#dedede, #fff 5px 11px, #efefef 11px); }
.fragment svg { width: 1248px; height: 31px; }
.people { position: absolute; left: 1541px; top: 14px; width: 16px; height: 22px; }
```
FILE: app.js
```js
// Each row: depth, then [text, style, x] runs and the x where the last run ends.
// x values are in layout units; UNIT converts them to pixels.
const UNIT = 1920 / 1568;
const rows = [
  [0, ['element of java.lang.Object[ ]', '', 476], ['(0x113f227)', 'g', 667], 740],
  [1, ['elementData', 'b', 496], ['of java.util.ArrayList', '', 596.5], ['(0x55e11d)', 'g', 722.5], 793.5],
  [2, ['elems', 'b', 516.5], ['of org.reactfx.util.ListHelper$MultiElemHelper', '', 564], ['(0x55e11c)', 'g', 849], 919],
  [3, ['observers', 'b', 537], ['of org.reactfx.PausableEventStream', '', 617], ['(declared by org.reactfx.ObservableBase) (0x55e11b)', 'g', 848], 1190.5],
  [4, ['richChangeList', 'b', 557], ['of org.fxmisc.richtext.model.SimpleEditableStyledDocument', '', 672], ['(declared by org.fxmisc.richtext.model.GenericEditableStyledDocumentBase)', 'g', 1050], ['(0x55e119)', 'g', 1538.5], 1609],
  [5, ['content', 'b', 578], ['of com.asml.d4m.gui.client.base.ui.javafx.PatternConstrainCodeArea', '', 641], ['(declared by org.fxmisc.richtext.GenericStyledArea) (0x55dd30)', 'g', 1072.5], 1474.5],
  [6, ['arg$1', 'b', 599], ['of com.asml.d4m.gui.client.base.ui.javafx.PatternConstrainCodeArea$$Lambda$955.462735241 (0x55e137)', '', 645.5], 1315.5],
  [7, ['elem', 'b', 619], ['of org.reactfx.util.ListHelper$SingleElemHelper', '', 658], ['(0x55e136)', 'g', 953], 1023],
  [8, ['observers', 'b', 639.5], ['of org.reactfx.SuccessionReducingStream', '', 719], ['(declared by org.reactfx.ObservableBase) (0x55e135)', 'g', 985.5], 1327.5],
  [9, ['arg$1', 'b', 660], ['of org.reactfx.SuccessionReducingStream$$Lambda$601.1521986562', '', 706], ['(0x55e150)', 'g', 1151], 1221],
  [10, ['action', 'b', 680.5], ['of org.reactfx.util.FxTimer', '', 731], ['(0x55e13a)', 'g', 894], 965],
  [11, ['arg$1', 'b', 701], ['of org.reactfx.util.FxTimer$$Lambda$1007.1932330893', '', 747], ['(0x55e148)', 'g', 1096], 1167],
  [12, ['onFinished', 'b', 721], ['of javafx.animation.KeyFrame', '', 804], ['(0x55e147)', 'g', 994], 1065],
  [13, ['element of javafx.animation.KeyFrame[ ]', '', 741.5], ['(0x113f229)', 'g', 1000], 1073],
  [14, ['keyFrames', 'b', 762], ['of com.sun.scenario.animation.shared.TimelineClipCore', '', 844.5], ['(0x55e146)', 'g', 1194], 1265],
  [15, ['clipCore', 'b', 782.5], ['of javafx.animation.Timeline', '', 846.5], ['(0x55e13c)', 'g', 1023], 1092.5],
  [16, ['this$0', 'b', 803], ['of javafx.animation.Animation$1', '', 853.5], ['(0x55e13e)', 'g', 1056], 1126],
  [17, ['element of com.sun.scenario.animation.shared.PulseReceiver[ ]', '', 823], ['(0x10cacd7)', 'g', 1226], 1305],
  [18, ['receivers', 'b', 843.5], ['of com.sun.javafx.tk.quantum.MasterTimer', '', 917.5], ['(declared by com.sun.scenario.animation.AbstractMasterTimer)', 'g', 1184], 1581],
  [19, ['this$0', 'b', 864.5], ['of com.sun.scenario.animation.AbstractMasterTimer$MainLoop', '', 914], ['(0x106ee9b)', 'g', 1312], 1392],
  [20, ['animationRunnable', 'b', 884.5], ['of com.sun.javafx.tk.quantum.QuantumToolkit', '', 1029.5], ['(0xb435)', 'g', 1315.5], 1372],
  [21, ['static', '', 921], ['TOOLKIT', 'b', 961.5], ['of class com.sun.javafx.tk.Toolkit', '', 1028], ['(0x3c6f)', 'g', 1238.500], 1290.5],
  [19, ['timer', 'b', 864.5], ['of javafx.animation.Timeline', '', 907.5], ['(declared by javafx.animation.Animation) (0x3b11c)', 'g', 1084.5], 1407],
  [20, ['activationTimer', 'b', 884.5], ['of javafx.scene.control.Tooltip$TooltipBehavior', '', 1006.5], ['(0x3b11b)', 'g', 1305], 1368],
  [21, ['static', '', 921], ['BEHAVIOR', 'b', 961], ['of class javafx.scene.control.Tooltip', '', 1035.5], ['(0x2a0d)', 'g', 1263.5], 1320.5],
];

const BASE = 282;
const STEP = 25;
const tree = document.getElementById('tree');
rows.forEach(([depth, ...runs], i) => {
  const end = runs.pop();
  const leaf = depth === 21;
  const stub = leaf ? 'M17 10h6' : 'M12.5 14v6';
  let html = `<svg class="handle" viewBox="0 0 25 20"><path d="M12.5 0v6M17 10h6" stroke="#7d9cc9" stroke-width="1.2"/>
    <path d="${stub}" stroke="#333" stroke-width="2"/><circle cx="12.5" cy="10" r="4" fill="#fff" stroke="#444" stroke-width="1.4"/><circle cx="12.5" cy="10" r="1.5" fill="#222"/></svg>
    <svg class="ref"><use href="#ref"/></svg>`.replace(/>\s+</g, '><');
  if (leaf) html += '<svg class="class"><use href="#cls"/></svg>';
  if (i === 20 || i === 21) html += `<i class="guide" style="left:${BASE + 19 * STEP + 12}px"></i>`;
  const segs = runs.map(([text, style, x], k) => {
    const last = k === runs.length - 1;
    const width = ((last ? end : runs[k + 1][2]) - x) * UNIT;
    const weight = style === 'b' ? 'font-weight:bold;' : '';
    return `<span class="seg ${style}" data-w="${width - (last ? 0 : 5)}" style="${weight}width:${width}px">${text}</span>`;
  }).join('');
  html += i === 6 ? `<span class="selected">${segs}</span>` : segs;
  const row = document.createElement('div');
  row.className = leaf ? 'row leaf' : 'row';
  row.style.paddingLeft = `${BASE + STEP * depth}px`;
  row.innerHTML = html;
  tree.append(row);
});

// Tracks each label out (or in) so it fills its declared width.
document.querySelectorAll('[data-w]').forEach((el) => {
  const range = document.createRange();
  range.selectNodeContents(el);
  const box = range.getBoundingClientRect();
  const natural = el.closest('.watermark') ? box.height : box.width;
  el.style.letterSpacing = `${(el.dataset.w - natural) / el.textContent.length}px`;
});
```
